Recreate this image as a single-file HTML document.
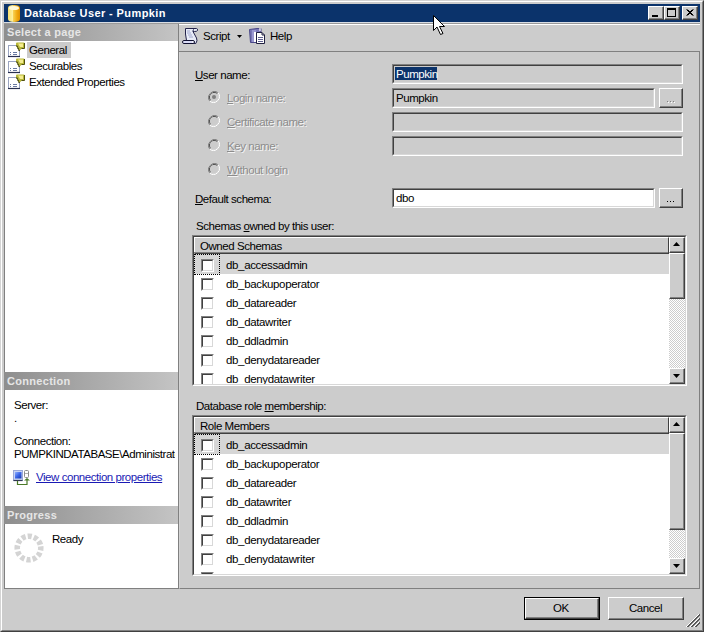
<!DOCTYPE html>
<html><head><meta charset="utf-8">
<style>
*{margin:0;padding:0;box-sizing:border-box}
html,body{width:704px;height:632px;overflow:hidden;background:#cccccc}
body{position:relative;font-family:"Liberation Sans",sans-serif;font-size:11px;color:#000}
.a{position:absolute}
.t{position:absolute;white-space:pre;line-height:13px;letter-spacing:-0.45px;font-size:11.5px}
.dis{color:#8c8c8c;text-shadow:1px 1px 0 #f4f4f4}
.u{text-decoration:underline}
/* sunken textbox */
.tb{position:absolute;border-top:1px solid #808080;border-left:1px solid #808080;border-right:1px solid #fff;border-bottom:1px solid #fff;background:#cccccc}
.tb>i{position:absolute;left:0;top:0;right:0;bottom:0;border-top:1px solid #404040;border-left:1px solid #404040;border-right:1px solid #d8d8d8;border-bottom:1px solid #d8d8d8}
.btn{position:absolute;border-top:1px solid #fff;border-left:1px solid #fff;border-right:1px solid #404040;border-bottom:1px solid #404040;background:#cccccc}
.btn>i{position:absolute;left:0;top:0;right:0;bottom:0;border-right:1px solid #808080;border-bottom:1px solid #808080}
.hdr{position:absolute;left:4px;width:174px;height:18px;background:linear-gradient(to right,#8e8e8e,#c4c4c4);color:#e6e6e6;font-weight:bold;font-size:11px;line-height:18px;padding-left:3px;letter-spacing:0.3px}
.cb{position:absolute;left:201px;width:13px;height:13px;border-top:1px solid #808080;border-left:1px solid #808080;border-right:1px solid #fff;border-bottom:1px solid #fff;background:#fff}
.cb>i{position:absolute;left:0;top:0;right:0;bottom:0;border-top:1px solid #404040;border-left:1px solid #404040;border-right:1px solid #d8d8d8;border-bottom:1px solid #d8d8d8}
.radio{position:absolute;left:208px;width:12px;height:12px}
</style></head><body>

<!-- window frame -->
<div class="a" style="left:0;top:0;width:704px;height:632px;border-top:1px solid #d4d4d4;border-left:1px solid #d4d4d4;border-right:1px solid #404040;border-bottom:1px solid #404040"></div>
<div class="a" style="left:1px;top:1px;width:702px;height:630px;border-top:1px solid #fff;border-left:1px solid #fff;border-right:1px solid #808080;border-bottom:1px solid #808080"></div>

<!-- title bar -->
<div class="a" style="left:4px;top:4px;width:696px;height:18px;background:#0b336b"></div>
<svg class="a" style="left:8px;top:5px" width="12" height="17" viewBox="0 0 12 17">
 <defs><linearGradient id="cyl" x1="0" x2="1"><stop offset="0" stop-color="#f8e070"/><stop offset=".4" stop-color="#fff0a0"/><stop offset=".45" stop-color="#f8d050"/><stop offset=".75" stop-color="#f0a810"/><stop offset="1" stop-color="#e09000"/></linearGradient></defs>
 <path d="M0 3 Q0 0 6 0 Q12 0 12 3 V14 Q12 17 6 17 Q0 17 0 14 Z" fill="url(#cyl)"/>
 <path d="M1 3 Q1 1 6 1 Q11 1 11 3 Q11 5 6 5 Q1 5 1 3Z" fill="#fff8d8"/>
</svg>
<div class="t" style="left:24px;top:7px;color:#fff;font-weight:bold;font-size:11px;letter-spacing:0.4px">Database User - Pumpkin</div>
<!-- caption buttons -->
<div class="btn" style="left:648px;top:6px;width:16px;height:14px"><i></i></div>
<div class="a" style="left:652px;top:15px;width:6px;height:2px;background:#000"></div>
<div class="btn" style="left:664px;top:6px;width:16px;height:14px"><i></i></div>
<div class="a" style="left:667px;top:8px;width:9px;height:9px;border:1px solid #000;border-top-width:2px"></div>
<div class="btn" style="left:682px;top:6px;width:16px;height:14px"><i></i></div>
<svg class="a" style="left:682px;top:6px" width="16" height="14"><path d="M4.5 3.5 L10.5 9.5 M5.5 3.5 L11.5 9.5 M10.5 3.5 L4.5 9.5 M11.5 3.5 L5.5 9.5" stroke="#000" stroke-width="1"/></svg>

<!-- left panel -->
<div class="a" style="left:4px;top:23px;width:175px;height:566px;background:#fff;border-left:1px solid #808080;border-bottom:1px solid #808080;border-right:1px solid #808080"></div>
<div class="a" style="left:4px;top:22px;width:696px;height:1px;background:#d8dde4"></div>
<div class="a" style="left:4px;top:23px;width:696px;height:1px;background:#999"></div>
<div class="hdr" style="top:24px;height:17px;line-height:17px">Select a page</div>
<div class="a" style="left:27px;top:42px;width:44px;height:16px;background:#cbcbcb"></div>
<svg class="a" style="left:8px;top:42px" width="17" height="16" viewBox="0 0 17 16">
 <rect x="0.5" y="3.5" width="11" height="11" fill="#fff" stroke="#9aa4c0"/>
 <path d="M0 14.5 H12" stroke="#283050" stroke-width="1.2"/>
 <path d="M2 10.5 H3 M5 10.5 H9 M2 12.5 H3 M5 12.5 H9" stroke="#6878a0"/>
 <path d="M8 1.5 Q8 0.5 9 0.5 H15.5 Q16.5 0.5 16.5 1.5 V6.5 L14 6.5 L11 9 L8 3.5 Z" fill="#b8b838"/>
 <path d="M10 1.5 H15 V5 H12 Z" fill="#f4ec90"/>
 <path d="M16.5 1 V6.5 H13.5" fill="none" stroke="#505010"/>
 <path d="M8.5 3.5 L9.5 5 M9.5 5.5 L10.5 7 M10.5 7.5 L11.5 9" stroke="#303008" stroke-width="1.2"/>
</svg>
<svg class="a" style="left:8px;top:58px" width="17" height="16" viewBox="0 0 17 16">
 <rect x="0.5" y="3.5" width="11" height="11" fill="#fff" stroke="#9aa4c0"/>
 <path d="M0 14.5 H12" stroke="#283050" stroke-width="1.2"/>
 <path d="M2 10.5 H3 M5 10.5 H9 M2 12.5 H3 M5 12.5 H9" stroke="#6878a0"/>
 <path d="M8 1.5 Q8 0.5 9 0.5 H15.5 Q16.5 0.5 16.5 1.5 V6.5 L14 6.5 L11 9 L8 3.5 Z" fill="#b8b838"/>
 <path d="M10 1.5 H15 V5 H12 Z" fill="#f4ec90"/>
 <path d="M16.5 1 V6.5 H13.5" fill="none" stroke="#505010"/>
 <path d="M8.5 3.5 L9.5 5 M9.5 5.5 L10.5 7 M10.5 7.5 L11.5 9" stroke="#303008" stroke-width="1.2"/>
</svg>
<svg class="a" style="left:8px;top:74px" width="17" height="16" viewBox="0 0 17 16">
 <rect x="0.5" y="3.5" width="11" height="11" fill="#fff" stroke="#9aa4c0"/>
 <path d="M0 14.5 H12" stroke="#283050" stroke-width="1.2"/>
 <path d="M2 10.5 H3 M5 10.5 H9 M2 12.5 H3 M5 12.5 H9" stroke="#6878a0"/>
 <path d="M8 1.5 Q8 0.5 9 0.5 H15.5 Q16.5 0.5 16.5 1.5 V6.5 L14 6.5 L11 9 L8 3.5 Z" fill="#b8b838"/>
 <path d="M10 1.5 H15 V5 H12 Z" fill="#f4ec90"/>
 <path d="M16.5 1 V6.5 H13.5" fill="none" stroke="#505010"/>
 <path d="M8.5 3.5 L9.5 5 M9.5 5.5 L10.5 7 M10.5 7.5 L11.5 9" stroke="#303008" stroke-width="1.2"/>
</svg>
<div class="t" style="left:29px;top:44px">General</div>
<div class="t" style="left:29px;top:60px">Securables</div>
<div class="t" style="left:29px;top:76px">Extended Properties</div>

<div class="hdr" style="top:372px">Connection</div>
<div class="t" style="left:14px;top:399px">Server:</div>
<div class="t" style="left:14px;top:412px">.</div>
<div class="t" style="left:14px;top:435px">Connection:</div>
<div class="a" style="left:14px;top:448px;width:161px;height:13px;overflow:hidden"><div class="t" style="left:0;top:0">PUMPKINDATABASE\Administrator</div></div>
<svg class="a" style="left:13px;top:470px" width="17" height="16" viewBox="0 0 17 16">
 <defs><linearGradient id="scr" x1="0" y1="0" x2="1" y2="1"><stop offset="0" stop-color="#8fb0ff"/><stop offset=".5" stop-color="#3a64e8"/><stop offset="1" stop-color="#1838a8"/></linearGradient></defs>
 <rect x="0.5" y="0.5" width="9" height="10" fill="#c8d4f4" stroke="#9aa8d8"/>
 <rect x="2" y="2" width="6.5" height="6.5" fill="url(#scr)"/>
 <path d="M0.5 10.5 H9.5" stroke="#303850" stroke-width="1.2"/>
 <rect x="11.5" y="0.5" width="4" height="7" rx="1" fill="#fff" stroke="#8a8a8a"/>
 <path d="M12 3.5 H15" stroke="#b0b0b0"/>
 <path d="M4.5 11 V14.5 H14 V9" fill="none" stroke="#4a7a28" stroke-width="1.2"/>
 <path d="M11 10.5 L14 8 L17 10.5 Z" fill="#4a7a28"/>
</svg>
<div class="t u" style="left:36px;top:471px;color:#1a1ab4">View connection properties</div>

<div class="hdr" style="top:506px">Progress</div>
<svg class="a" style="left:14px;top:533px" width="30" height="30" viewBox="0 0 30 30">
 <circle cx="15" cy="15" r="11.8" fill="none" stroke="#d4d4d4" stroke-width="5.6" stroke-dasharray="4.0 2.18" transform="rotate(-8 15 15)"/>
</svg>
<div class="t" style="left:52px;top:533px">Ready</div>

<!-- right panel -->
<div class="a" style="left:179px;top:24px;width:521px;height:28px;border-top:1px solid #fff;border-bottom:1px solid #808080"></div>
<div class="a" style="left:179px;top:52px;width:521px;height:537px;border-right:1px solid #808080;border-bottom:1px solid #808080;border-left:1px solid #d4d4d4"></div>

<svg class="a" style="left:182px;top:28px" width="17" height="16" viewBox="0 0 17 16">
 <path d="M3.5 0.5 H14.5 Q16 0.8 15.5 2.5 Q15 3.5 12.5 3.5 H11 L14.5 10 Q15.8 12.8 13.8 15.5 H5 L4.5 12.5 L3.5 6 Z" fill="#e8ecf8" stroke="#22224a"/>
 <path d="M11 3.5 Q10.5 2 12 1.5" fill="none" stroke="#22224a"/>
 <rect x="0.5" y="12.5" width="12" height="3" rx="1.5" fill="#f4f4ff" stroke="#101030"/>
 <path d="M2 14 H10" stroke="#c0c4f0"/>
 <path d="M5 3 H8 M5 5 H9 M6 7 H10 M7 9 H11" stroke="#9aa0c8" stroke-width="0.9"/>
</svg>
<svg class="a" style="left:249px;top:28px" width="17" height="16" viewBox="0 0 17 16">
 <path d="M0.5 1.5 L8 0.5 H12 V14.5 H1.5 Z" fill="#7a78b8" stroke="#4a4888"/>
 <path d="M3 2 H7 V14 H3 Z" fill="#9a98d0"/>
 <path d="M5 4 H7 V14 H5 Z" fill="#fff"/>
 <path d="M7.5 4.5 H13 L15.5 7 V15.5 H7.5 Z" fill="#fff" stroke="#202040"/>
 <path d="M13 4.5 V7 H15.5" fill="none" stroke="#202040"/>
 <path d="M9 9.5 H14 M9 11.5 H14 M9 13.5 H14" stroke="#606090"/>
 <path d="M11 0 V3" stroke="#fff" stroke-width="1.2"/>
</svg>
<div class="t" style="left:203px;top:30px">Script</div>
<svg class="a" style="left:237px;top:35px" width="7" height="4"><path d="M0 0 H5 L2.5 3 Z" fill="#000"/></svg>
<div class="t" style="left:270px;top:30px">Help</div>

<div class="t" style="left:195px;top:69px"><span class="u">U</span>ser name:</div>
<svg class="a" style="left:208px;top:91px" width="12" height="12" viewBox="0 0 12 12">
 <path d="M10.2 1.8 A6 6 0 0 0 1.8 10.2" fill="none" stroke="#808080" stroke-width="1"/>
 <path d="M9.5 2.5 A5 5 0 0 0 2.5 9.5" fill="none" stroke="#404040" stroke-width="1"/>
 <path d="M1.8 10.2 A6 6 0 0 0 10.2 1.8" fill="none" stroke="#ffffff" stroke-width="1"/>
 <path d="M2.5 9.5 A5 5 0 0 0 9.5 2.5" fill="none" stroke="#d8d8d8" stroke-width="1"/>
 <circle cx="6" cy="6" r="4" fill="#cccccc"/><circle cx="6" cy="6" r="2" fill="#808080"/>
</svg><svg class="a" style="left:208px;top:115px" width="12" height="12" viewBox="0 0 12 12">
 <path d="M10.2 1.8 A6 6 0 0 0 1.8 10.2" fill="none" stroke="#808080" stroke-width="1"/>
 <path d="M9.5 2.5 A5 5 0 0 0 2.5 9.5" fill="none" stroke="#404040" stroke-width="1"/>
 <path d="M1.8 10.2 A6 6 0 0 0 10.2 1.8" fill="none" stroke="#ffffff" stroke-width="1"/>
 <path d="M2.5 9.5 A5 5 0 0 0 9.5 2.5" fill="none" stroke="#d8d8d8" stroke-width="1"/>
 <circle cx="6" cy="6" r="4" fill="#cccccc"/>
</svg><svg class="a" style="left:208px;top:139px" width="12" height="12" viewBox="0 0 12 12">
 <path d="M10.2 1.8 A6 6 0 0 0 1.8 10.2" fill="none" stroke="#808080" stroke-width="1"/>
 <path d="M9.5 2.5 A5 5 0 0 0 2.5 9.5" fill="none" stroke="#404040" stroke-width="1"/>
 <path d="M1.8 10.2 A6 6 0 0 0 10.2 1.8" fill="none" stroke="#ffffff" stroke-width="1"/>
 <path d="M2.5 9.5 A5 5 0 0 0 9.5 2.5" fill="none" stroke="#d8d8d8" stroke-width="1"/>
 <circle cx="6" cy="6" r="4" fill="#cccccc"/>
</svg><svg class="a" style="left:208px;top:163px" width="12" height="12" viewBox="0 0 12 12">
 <path d="M10.2 1.8 A6 6 0 0 0 1.8 10.2" fill="none" stroke="#808080" stroke-width="1"/>
 <path d="M9.5 2.5 A5 5 0 0 0 2.5 9.5" fill="none" stroke="#404040" stroke-width="1"/>
 <path d="M1.8 10.2 A6 6 0 0 0 10.2 1.8" fill="none" stroke="#ffffff" stroke-width="1"/>
 <path d="M2.5 9.5 A5 5 0 0 0 9.5 2.5" fill="none" stroke="#d8d8d8" stroke-width="1"/>
 <circle cx="6" cy="6" r="4" fill="#cccccc"/>
</svg>
<div class="t dis" style="left:227px;top:92px"><span class="u">L</span>ogin name:</div>
<div class="t dis" style="left:227px;top:116px"><span class="u">C</span>ertificate name:</div>
<div class="t dis" style="left:227px;top:140px"><span class="u">K</span>ey name:</div>
<div class="t dis" style="left:227px;top:164px"><span class="u">W</span>ithout login</div>
<div class="t" style="left:195px;top:193px"><span class="u">D</span>efault schema:</div>

<div class="tb" style="left:392px;top:64px;width:291px;height:20px"><i></i></div>
<div class="a" style="left:395px;top:67px;width:42px;height:13px;background:#0b336b"></div>
<div class="t" style="left:396px;top:68px;color:#fff">Pumpkin</div>
<div class="tb" style="left:392px;top:88px;width:263px;height:20px"><i></i></div>
<div class="t" style="left:396px;top:92px">Pumpkin</div>
<div class="btn" style="left:659px;top:88px;width:24px;height:20px"><i></i></div>
<div class="tb" style="left:392px;top:112px;width:291px;height:20px"><i></i></div>
<div class="tb" style="left:392px;top:136px;width:291px;height:20px"><i></i></div>
<div class="tb" style="left:392px;top:188px;width:263px;height:20px;background:#fff"><i></i></div>
<div class="t" style="left:396px;top:192px">dbo</div>
<div class="btn" style="left:659px;top:188px;width:24px;height:20px"><i></i></div>

<svg class="a" style="left:666px;top:100px" width="10" height="3"><path d="M2 2h1v1h-1zM5 2h1v1h-1zM8 2h1v1h-1z" fill="#fff"/><path d="M1 1h1v1h-1zM4 1h1v1h-1zM7 1h1v1h-1z" fill="#808080"/></svg>
<svg class="a" style="left:666px;top:200px" width="10" height="3"><path d="M1 1h1v1h-1zM4 1h1v1h-1zM7 1h1v1h-1z" fill="#000"/></svg>
<div class="t" style="left:196px;top:220px">Schemas <span class="u">o</span>wned by this user:</div>
<div class="t" style="left:196px;top:400px">Database role <span class="u">m</span>embership:</div>

<!-- schema list -->
<div class="a" style="left:192px;top:235px;width:495px;height:151px;border-top:1px solid #808080;border-left:1px solid #808080;border-right:1px solid #fff;border-bottom:1px solid #fff"></div>
<div class="a" style="left:193px;top:236px;width:493px;height:149px;border-top:1px solid #404040;border-left:1px solid #404040;border-right:1px solid #d8d8d8;border-bottom:1px solid #d8d8d8;background:#fff;overflow:hidden">
<div class="a" style="left:0;top:0;width:475px;height:17px;background:#cccccc;border-top:1px solid #fff;border-left:1px solid #fff;border-bottom:1px solid #404040;border-right:1px solid #404040"></div>
<div class="a" style="left:0;top:15px;width:474px;height:1px;background:#808080"></div>
<div class="t" style="left:6px;top:3px">Owned Schemas</div>
<div class="a" style="left:0;top:17px;width:475px;height:20px;background:#d6d6d6"></div>
<div class="a" style="left:0;top:17px;width:26px;height:21px;border:1px dotted #000"></div>
<div class="cb" style="left:7px;top:22px"><i></i></div>
<div class="t" style="left:32px;top:22px;letter-spacing:-0.35px">db_accessadmin</div>
<div class="cb" style="left:7px;top:41px"><i></i></div>
<div class="t" style="left:32px;top:41px;letter-spacing:-0.35px">db_backupoperator</div>
<div class="cb" style="left:7px;top:60px"><i></i></div>
<div class="t" style="left:32px;top:60px;letter-spacing:-0.35px">db_datareader</div>
<div class="cb" style="left:7px;top:79px"><i></i></div>
<div class="t" style="left:32px;top:79px;letter-spacing:-0.35px">db_datawriter</div>
<div class="cb" style="left:7px;top:98px"><i></i></div>
<div class="t" style="left:32px;top:98px;letter-spacing:-0.35px">db_ddladmin</div>
<div class="cb" style="left:7px;top:117px"><i></i></div>
<div class="t" style="left:32px;top:117px;letter-spacing:-0.35px">db_denydatareader</div>
<div class="cb" style="left:7px;top:136px"><i></i></div>
<div class="t" style="left:32px;top:136px;letter-spacing:-0.35px">db_denydatawriter</div>
<div class="cb" style="left:7px;top:155px"><i></i></div>
<div class="t" style="left:32px;top:155px;letter-spacing:-0.35px">db_owner</div>
<div class="a" style="left:475px;top:0;width:16px;height:147px;background:repeating-conic-gradient(#fff 0 25%,#cccccc 0 50%) 0 0/2px 2px"></div>
<div class="btn" style="left:475px;top:0;width:16px;height:16px"><i></i></div>
<svg class="a" style="left:479px;top:5px" width="7" height="4"><path d="M3.5 0 L7 4 H0 Z" fill="#000"/></svg>
<div class="btn" style="left:475px;top:16px;width:16px;height:46px"><i></i></div>
<div class="btn" style="left:475px;top:131px;width:16px;height:16px"><i></i></div>
<svg class="a" style="left:479px;top:137px" width="7" height="4"><path d="M0 0 H7 L3.5 4 Z" fill="#000"/></svg>
</div>
<!-- role list -->
<div class="a" style="left:192px;top:415px;width:495px;height:161px;border-top:1px solid #808080;border-left:1px solid #808080;border-right:1px solid #fff;border-bottom:1px solid #fff"></div>
<div class="a" style="left:193px;top:416px;width:493px;height:159px;border-top:1px solid #404040;border-left:1px solid #404040;border-right:1px solid #d8d8d8;border-bottom:1px solid #d8d8d8;background:#fff;overflow:hidden">
<div class="a" style="left:0;top:0;width:475px;height:17px;background:#cccccc;border-top:1px solid #fff;border-left:1px solid #fff;border-bottom:1px solid #404040;border-right:1px solid #404040"></div>
<div class="a" style="left:0;top:15px;width:474px;height:1px;background:#808080"></div>
<div class="t" style="left:6px;top:3px">Role Members</div>
<div class="a" style="left:0;top:17px;width:475px;height:20px;background:#d6d6d6"></div>
<div class="a" style="left:0;top:17px;width:26px;height:21px;border:1px dotted #000"></div>
<div class="cb" style="left:7px;top:22px"><i></i></div>
<div class="t" style="left:32px;top:22px;letter-spacing:-0.35px">db_accessadmin</div>
<div class="cb" style="left:7px;top:41px"><i></i></div>
<div class="t" style="left:32px;top:41px;letter-spacing:-0.35px">db_backupoperator</div>
<div class="cb" style="left:7px;top:60px"><i></i></div>
<div class="t" style="left:32px;top:60px;letter-spacing:-0.35px">db_datareader</div>
<div class="cb" style="left:7px;top:79px"><i></i></div>
<div class="t" style="left:32px;top:79px;letter-spacing:-0.35px">db_datawriter</div>
<div class="cb" style="left:7px;top:98px"><i></i></div>
<div class="t" style="left:32px;top:98px;letter-spacing:-0.35px">db_ddladmin</div>
<div class="cb" style="left:7px;top:117px"><i></i></div>
<div class="t" style="left:32px;top:117px;letter-spacing:-0.35px">db_denydatareader</div>
<div class="cb" style="left:7px;top:136px"><i></i></div>
<div class="t" style="left:32px;top:136px;letter-spacing:-0.35px">db_denydatawriter</div>
<div class="cb" style="left:7px;top:155px"><i></i></div>
<div class="t" style="left:32px;top:155px;letter-spacing:-0.35px">db_owner</div>
<div class="a" style="left:475px;top:0;width:16px;height:157px;background:repeating-conic-gradient(#fff 0 25%,#cccccc 0 50%) 0 0/2px 2px"></div>
<div class="btn" style="left:475px;top:0;width:16px;height:16px"><i></i></div>
<svg class="a" style="left:479px;top:5px" width="7" height="4"><path d="M3.5 0 L7 4 H0 Z" fill="#000"/></svg>
<div class="btn" style="left:475px;top:16px;width:16px;height:97px"><i></i></div>
<div class="btn" style="left:475px;top:141px;width:16px;height:16px"><i></i></div>
<svg class="a" style="left:479px;top:147px" width="7" height="4"><path d="M0 0 H7 L3.5 4 Z" fill="#000"/></svg>
</div>
<!-- OK / Cancel -->
<div class="a" style="left:524px;top:597px;width:76px;height:23px;border:1px solid #000"></div>
<div class="btn" style="left:525px;top:598px;width:74px;height:21px"><i></i></div>
<div class="t" style="left:553px;top:602px">OK</div>
<div class="btn" style="left:608px;top:597px;width:76px;height:23px"><i></i></div>
<div class="t" style="left:629px;top:602px">Cancel</div>

<svg class="a" style="left:684px;top:611px" width="17" height="17" shape-rendering="crispEdges"><rect x="3" y="15" width="1" height="1" fill="#5a5a5a"/><rect x="4" y="15" width="1" height="1" fill="#5a5a5a"/><rect x="2" y="15" width="1" height="1" fill="#ffffff"/><rect x="4" y="14" width="1" height="1" fill="#5a5a5a"/><rect x="5" y="14" width="1" height="1" fill="#5a5a5a"/><rect x="3" y="14" width="1" height="1" fill="#ffffff"/><rect x="5" y="13" width="1" height="1" fill="#5a5a5a"/><rect x="6" y="13" width="1" height="1" fill="#5a5a5a"/><rect x="4" y="13" width="1" height="1" fill="#ffffff"/><rect x="6" y="12" width="1" height="1" fill="#5a5a5a"/><rect x="7" y="12" width="1" height="1" fill="#5a5a5a"/><rect x="5" y="12" width="1" height="1" fill="#ffffff"/><rect x="7" y="11" width="1" height="1" fill="#5a5a5a"/><rect x="8" y="11" width="1" height="1" fill="#5a5a5a"/><rect x="6" y="11" width="1" height="1" fill="#ffffff"/><rect x="8" y="10" width="1" height="1" fill="#5a5a5a"/><rect x="9" y="10" width="1" height="1" fill="#5a5a5a"/><rect x="7" y="10" width="1" height="1" fill="#ffffff"/><rect x="9" y="9" width="1" height="1" fill="#5a5a5a"/><rect x="10" y="9" width="1" height="1" fill="#5a5a5a"/><rect x="8" y="9" width="1" height="1" fill="#ffffff"/><rect x="10" y="8" width="1" height="1" fill="#5a5a5a"/><rect x="11" y="8" width="1" height="1" fill="#5a5a5a"/><rect x="9" y="8" width="1" height="1" fill="#ffffff"/><rect x="11" y="7" width="1" height="1" fill="#5a5a5a"/><rect x="12" y="7" width="1" height="1" fill="#5a5a5a"/><rect x="10" y="7" width="1" height="1" fill="#ffffff"/><rect x="12" y="6" width="1" height="1" fill="#5a5a5a"/><rect x="13" y="6" width="1" height="1" fill="#5a5a5a"/><rect x="11" y="6" width="1" height="1" fill="#ffffff"/><rect x="13" y="5" width="1" height="1" fill="#5a5a5a"/><rect x="14" y="5" width="1" height="1" fill="#5a5a5a"/><rect x="12" y="5" width="1" height="1" fill="#ffffff"/><rect x="14" y="4" width="1" height="1" fill="#5a5a5a"/><rect x="15" y="4" width="1" height="1" fill="#5a5a5a"/><rect x="13" y="4" width="1" height="1" fill="#ffffff"/><rect x="15" y="3" width="1" height="1" fill="#5a5a5a"/><rect x="14" y="3" width="1" height="1" fill="#ffffff"/><rect x="7" y="15" width="1" height="1" fill="#5a5a5a"/><rect x="8" y="15" width="1" height="1" fill="#5a5a5a"/><rect x="6" y="15" width="1" height="1" fill="#ffffff"/><rect x="8" y="14" width="1" height="1" fill="#5a5a5a"/><rect x="9" y="14" width="1" height="1" fill="#5a5a5a"/><rect x="7" y="14" width="1" height="1" fill="#ffffff"/><rect x="9" y="13" width="1" height="1" fill="#5a5a5a"/><rect x="10" y="13" width="1" height="1" fill="#5a5a5a"/><rect x="8" y="13" width="1" height="1" fill="#ffffff"/><rect x="10" y="12" width="1" height="1" fill="#5a5a5a"/><rect x="11" y="12" width="1" height="1" fill="#5a5a5a"/><rect x="9" y="12" width="1" height="1" fill="#ffffff"/><rect x="11" y="11" width="1" height="1" fill="#5a5a5a"/><rect x="12" y="11" width="1" height="1" fill="#5a5a5a"/><rect x="10" y="11" width="1" height="1" fill="#ffffff"/><rect x="12" y="10" width="1" height="1" fill="#5a5a5a"/><rect x="13" y="10" width="1" height="1" fill="#5a5a5a"/><rect x="11" y="10" width="1" height="1" fill="#ffffff"/><rect x="13" y="9" width="1" height="1" fill="#5a5a5a"/><rect x="14" y="9" width="1" height="1" fill="#5a5a5a"/><rect x="12" y="9" width="1" height="1" fill="#ffffff"/><rect x="14" y="8" width="1" height="1" fill="#5a5a5a"/><rect x="15" y="8" width="1" height="1" fill="#5a5a5a"/><rect x="13" y="8" width="1" height="1" fill="#ffffff"/><rect x="15" y="7" width="1" height="1" fill="#5a5a5a"/><rect x="14" y="7" width="1" height="1" fill="#ffffff"/><rect x="11" y="15" width="1" height="1" fill="#5a5a5a"/><rect x="12" y="15" width="1" height="1" fill="#5a5a5a"/><rect x="10" y="15" width="1" height="1" fill="#ffffff"/><rect x="12" y="14" width="1" height="1" fill="#5a5a5a"/><rect x="13" y="14" width="1" height="1" fill="#5a5a5a"/><rect x="11" y="14" width="1" height="1" fill="#ffffff"/><rect x="13" y="13" width="1" height="1" fill="#5a5a5a"/><rect x="14" y="13" width="1" height="1" fill="#5a5a5a"/><rect x="12" y="13" width="1" height="1" fill="#ffffff"/><rect x="14" y="12" width="1" height="1" fill="#5a5a5a"/><rect x="15" y="12" width="1" height="1" fill="#5a5a5a"/><rect x="13" y="12" width="1" height="1" fill="#ffffff"/><rect x="15" y="11" width="1" height="1" fill="#5a5a5a"/><rect x="14" y="11" width="1" height="1" fill="#ffffff"/></svg>
<svg class="a" style="left:432px;top:14px" width="14" height="22" viewBox="0 0 14 22">
 <path d="M1.5 1.5 V16.5 L5 13 L8.5 20.5 L11 19.5 L7.5 12.5 H12.5 Z" fill="#fff" stroke="#000" stroke-width="1" stroke-linejoin="miter"/>
</svg>
</body></html>
